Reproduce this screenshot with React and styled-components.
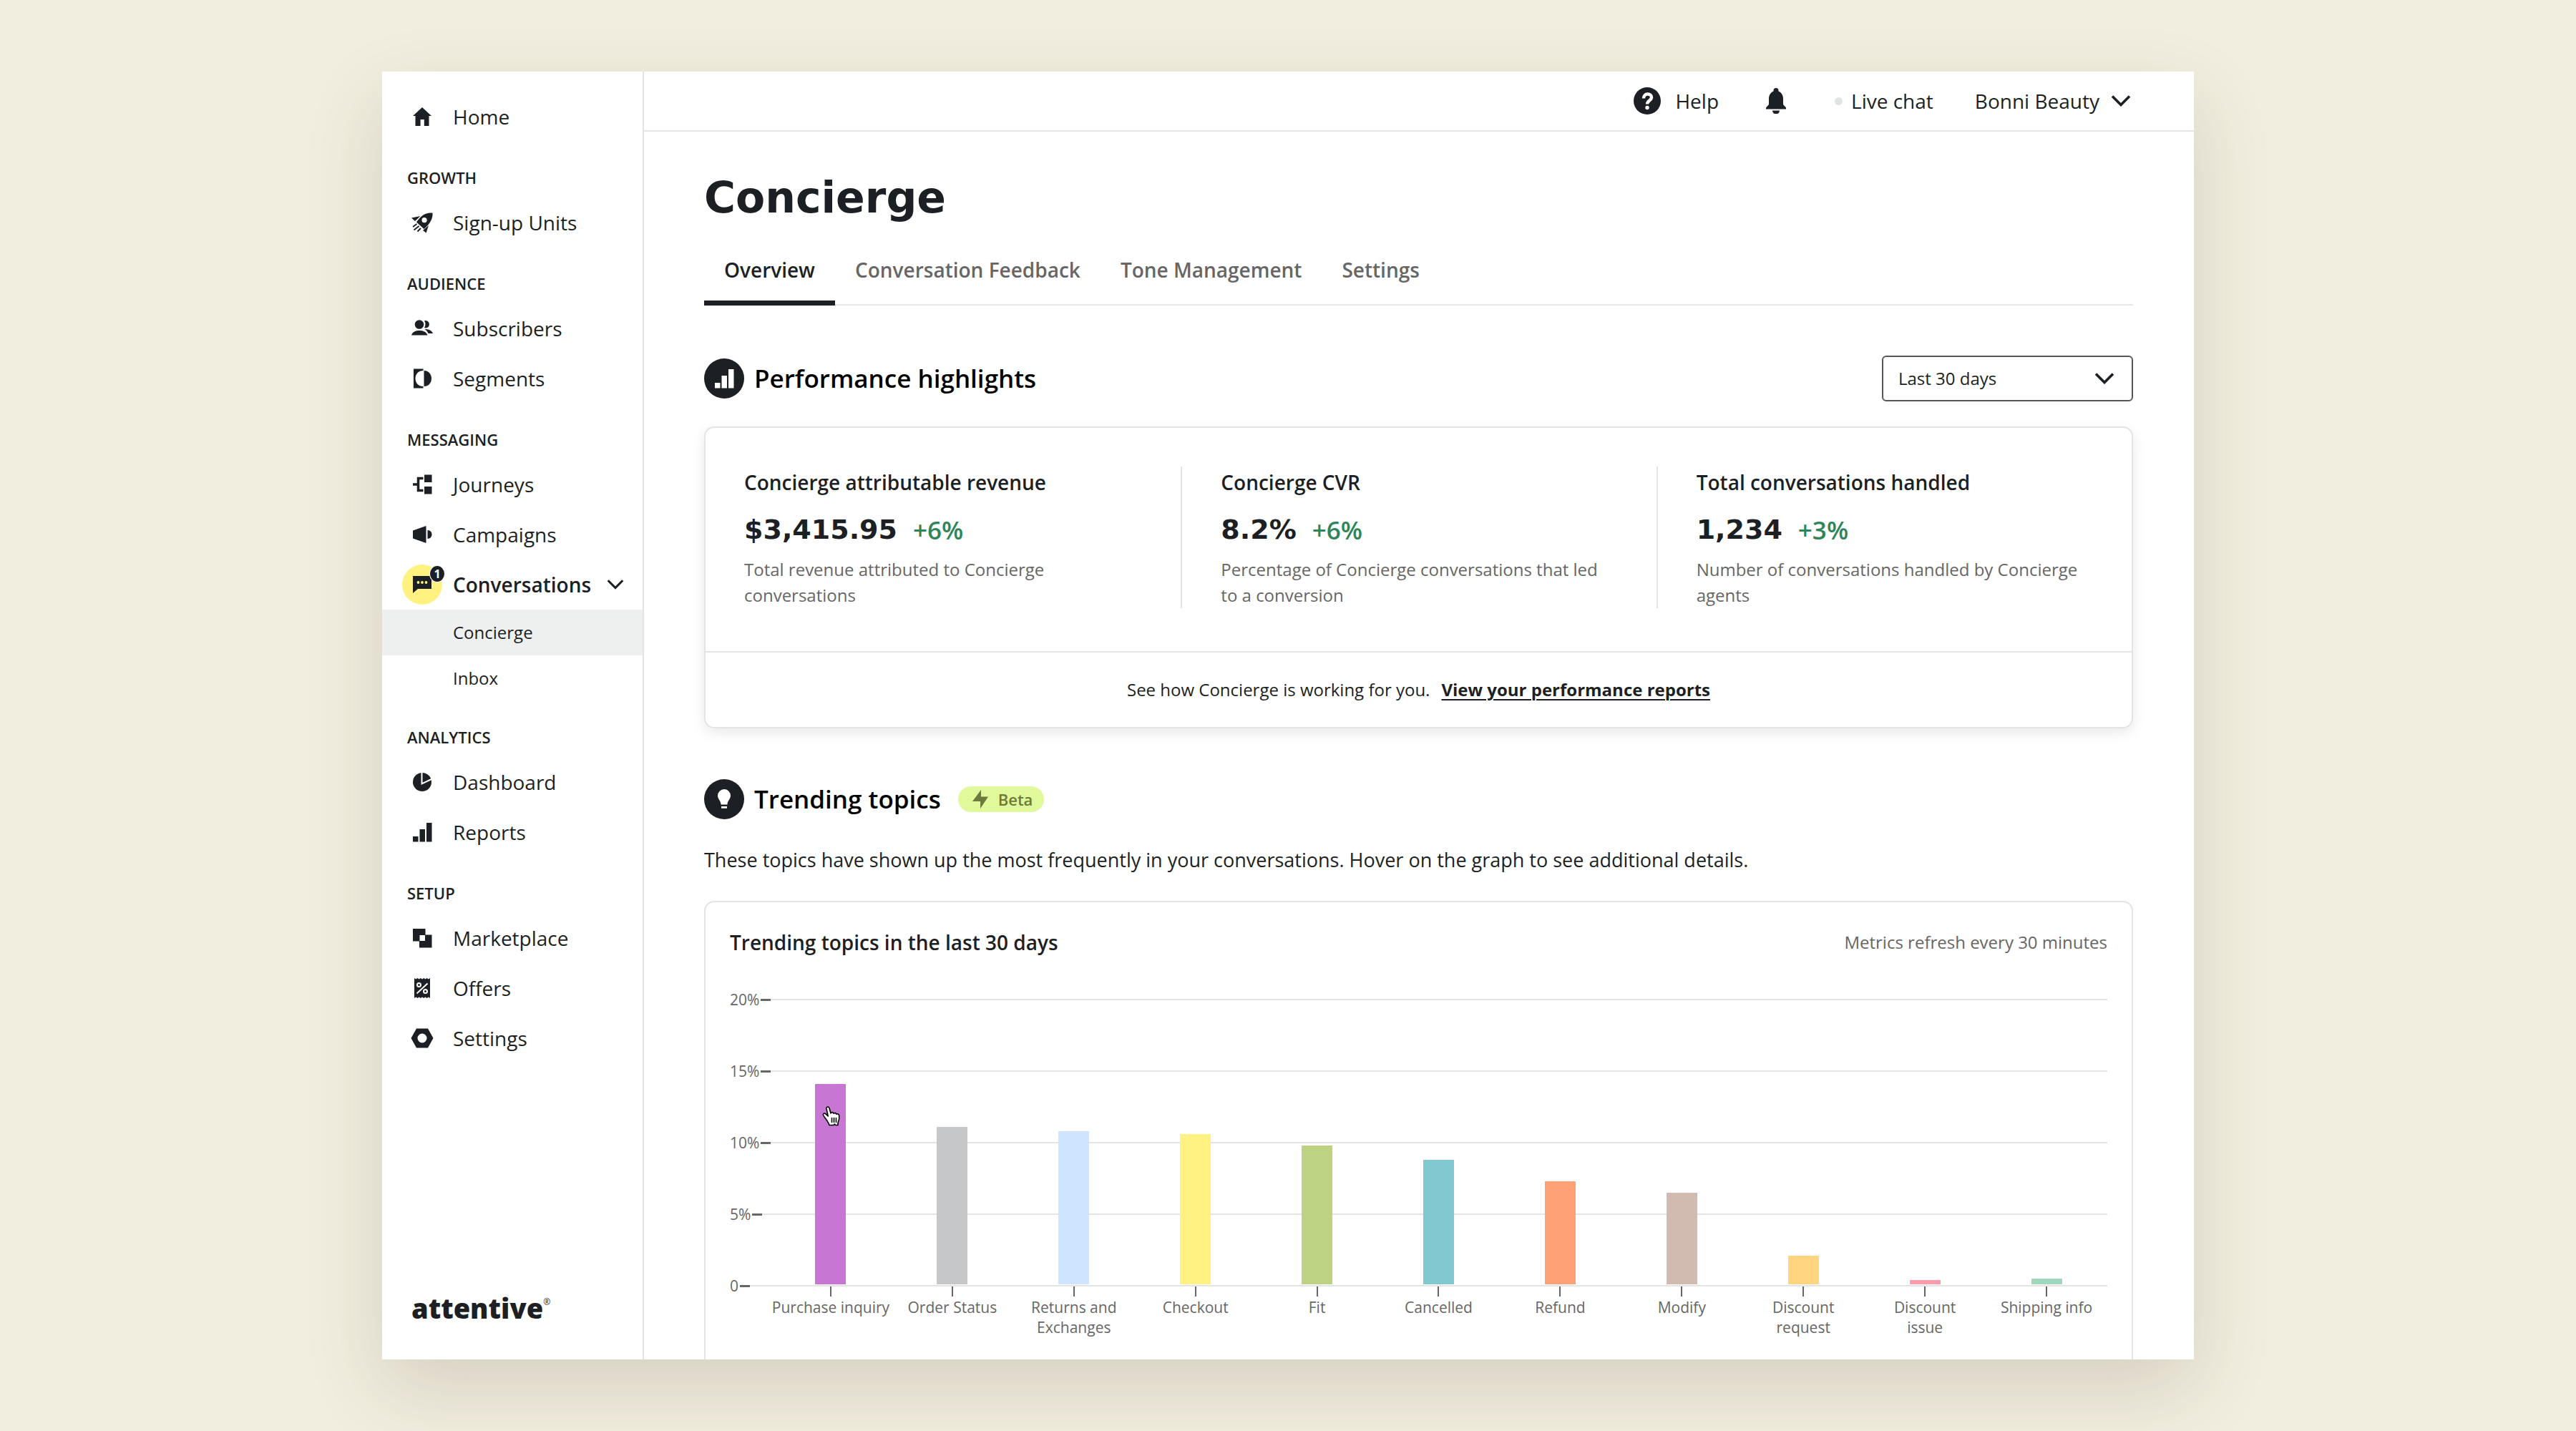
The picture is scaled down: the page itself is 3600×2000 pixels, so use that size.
import React from "react";
import styled, { createGlobalStyle, css } from "styled-components";

const INK = "#1c1f23";
const MUTED = "#666666";
const LINE = "#e4e4e4";
const BODY = `"Open Sans", "Noto Sans", sans-serif`;
const WIDE = `"DejaVu Sans", "Open Sans", sans-serif`;

const GlobalStyle = createGlobalStyle`
  *, *::before, *::after { box-sizing: border-box; }
  body { margin: 0; background: #f2eedf; color: ${INK}; font-family: ${BODY}; font-size: 28px; }
  h1, h2, h3, p, ul, dl, dd, figure { margin: 0; padding: 0; }
  ul { list-style: none; }
  a { color: inherit; text-decoration: none; }
  button, select { font: inherit; color: inherit; background: none; border: 0; padding: 0; cursor: pointer; }
  svg { display: block; flex: none; }
`;

const Stage = styled.div`
  min-height: 100vh;
  padding: 100px 534px;
  display: flex;
`;

const Window = styled.div`
  flex: 1;
  min-width: 0;
  display: flex;
  height: calc(100vh - 200px);
  overflow: hidden;
  background: #fff;
  box-shadow: 0 40px 100px rgba(60, 50, 30, 0.16);
`;

/* ---------- sidebar ---------- */

const Sidebar = styled.nav`
  width: 366px;
  flex: none;
  display: flex;
  flex-direction: column;
  justify-content: space-between;
  padding: 28px 0 52px;
  border-right: 2px solid ${LINE};
`;

const SectionLabel = styled.h3`
  padding: 34px 0 12px 35px;
  font-size: 22px;
  line-height: 32px;
  font-weight: 600;
`;

const NavLink = styled.a`
  display: flex;
  align-items: center;
  gap: 22px;
  height: 70px;
  padding: 0 28px 0 35px;
  line-height: 38px;
  font-weight: ${(p) => (p.$active ? 600 : 400)};
  > svg:last-child { margin-left: auto; }
`;

const NavIcon = styled.span`
  position: relative;
  width: 42px;
  height: 42px;
  flex: none;
  display: grid;
  place-items: center;
`;

const Halo = styled.span`
  width: 56px;
  height: 56px;
  margin: -7px;
  border-radius: 50%;
  background: #fff280;
  display: grid;
  place-items: center;
`;

const Count = styled.span`
  position: absolute;
  top: -6px;
  right: -11px;
  width: 22px;
  height: 24px;
  border-radius: 50%;
  border: 1px solid #fff;
  background: ${INK};
  color: #fff;
  font-size: 16px;
  line-height: 22px;
  font-weight: 700;
  text-align: center;
`;

const SubLink = styled.a`
  display: block;
  padding-left: 99px;
  font-size: 24px;
  line-height: 64px;
  background: ${(p) => (p.$active ? "#eef0f0" : "transparent")};
`;

const Logo = styled.a`
  display: flex;
  align-items: flex-start;
  padding-left: 41px;
  font-size: 38px;
  line-height: 40px;
  font-weight: 800;
  sup { font-size: 12px; line-height: 24px; font-weight: 400; vertical-align: top; }
`;

/* ---------- header ---------- */

const Main = styled.div`
  flex: 1;
  min-width: 0;
  display: flex;
  flex-direction: column;
`;

const Header = styled.header`
  display: flex;
  flex: none;
  justify-content: flex-end;
  align-items: center;
  height: 84px;
  padding-right: 88px;
  border-bottom: 2px solid ${LINE};
`;

const HeaderButton = styled.button`
  display: flex;
  align-items: center;
  gap: ${(p) => p.$gap || 20}px;
  margin-left: ${(p) => p.$space || 0}px;
  line-height: 38px;
`;

const Dot = styled.span`
  width: 11px;
  height: 11px;
  border-radius: 50%;
  background: #e2e4e4;
`;

/* ---------- content ---------- */

const Content = styled.main`
  flex: 1;
  min-height: 0;
  padding: 56px 85px 0 84px;
`;

const Title = styled.h1`
  font-family: ${WIDE};
  font-size: 60px;
  line-height: 72px;
  font-weight: 700;
`;

const Tabs = styled.div`
  display: flex;
  margin-top: 16px;
  border-bottom: 2px solid #e9e9e9;
`;

const Tab = styled.button`
  height: 99px;
  margin-bottom: -2px;
  padding: 0 28px 2px;
  font-weight: 600;
  color: ${(p) => (p.$active ? INK : MUTED)};
  box-shadow: ${(p) => (p.$active ? `inset 0 -7px 0 ${INK}` : "none")};
`;

const SectionHead = styled.div`
  display: flex;
  align-items: center;
  height: 64px;
  margin-top: ${(p) => p.$space}px;
`;

const Disc = styled.span`
  width: 56px;
  height: 56px;
  border-radius: 50%;
  background: ${INK};
  color: #fff;
  display: grid;
  place-items: center;
`;

const SectionTitle = styled.h2`
  margin-left: 14px;
  font-size: 35px;
  line-height: 48px;
  font-weight: 600;
  color: #000;
`;

const SelectBox = styled.label`
  position: relative;
  width: 351px;
  margin-left: auto;
  select {
    appearance: none;
    display: block;
    width: 100%;
    height: 64px;
    padding: 0 72px 2px 21px;
    border: 2px solid #54575a;
    border-radius: 6px;
    font-size: 24px;
  }
  svg { position: absolute; right: 26px; top: 24px; pointer-events: none; }
`;

const Card = styled.section`
  margin-top: ${(p) => p.$space}px;
  border: 2px solid ${LINE};
  border-radius: 14px;
  ${(p) => p.$raised && css`box-shadow: 0 6px 18px rgba(0, 0, 0, 0.09);`}
`;

const Stats = styled.div`
  display: grid;
  grid-template-columns: repeat(3, 1fr);
  padding: 54px 0 60px;
`;

const Stat = styled.article`
  padding: 0 54px;
  & + & { border-left: 2px solid ${LINE}; }
  h3 { font-size: 28px; line-height: 44px; font-weight: 600; }
  p { font-size: 24px; line-height: 36px; color: ${MUTED}; }
`;

const Figure = styled.div`
  display: flex;
  align-items: center;
  gap: 22px;
  margin: 22px 0 16px;
  height: 44px;
  strong { font-family: ${WIDE}; font-size: 38px; font-weight: 700; }
  span { font-size: 35px; font-weight: 600; color: #2f855a; }
`;

const CardFoot = styled.div`
  display: flex;
  justify-content: center;
  gap: 16px;
  border-top: 2px solid ${LINE};
  font-size: 24px;
  line-height: 104px;
  a { font-weight: 700; text-decoration: underline; text-decoration-thickness: 2px; text-underline-offset: 4px; }
`;

const Badge = styled.span`
  display: flex;
  align-items: center;
  gap: 14px;
  height: 36px;
  margin-left: 24px;
  padding: 0 16px 0 20px;
  border-radius: 18px;
  background: #e0f99b;
  color: #6c7a3c;
  font-size: 22px;
  font-weight: 600;
`;

const Lead = styled.p`
  margin-top: 33px;
  font-size: 27px;
  line-height: 40px;
`;

const ChartHead = styled.div`
  display: flex;
  justify-content: space-between;
  align-items: center;
  padding: 36px 34px 0;
  line-height: 40px;
  h3 { font-size: 28px; font-weight: 600; }
  p { font-size: 24px; color: ${MUTED}; }
`;

const Chart = styled.figure`
  display: grid;
  padding: 46px 34px 60px;
  > * { grid-area: 1 / 1; }
`;

const Scale = styled.ul`
  display: flex;
  flex-direction: column;
`;

const ScaleRow = styled.li`
  display: flex;
  align-items: center;
  height: 28px;
  margin-bottom: 72px;
  font-size: 21px;
  color: ${MUTED};
  &::after { content: ""; flex: 1; height: 2px; background: ${LINE}; }
`;

const ScaleTick = styled.span`
  width: 14px;
  height: 3px;
  margin-left: 2px;
  background: ${MUTED};
`;

const Bars = styled.ul`
  display: grid;
  grid-template-columns: repeat(11, 1fr);
  margin-left: 56px;
  padding-top: 12px;
`;

const Column = styled.li`
  display: flex;
  flex-direction: column;
  align-items: center;
  font-size: 21px;
  line-height: 28px;
  text-align: center;
  color: ${MUTED};
`;

const Track = styled.div`
  height: 402px;
  display: flex;
  align-items: flex-end;
  border-bottom: 2px solid transparent;
`;

const Bar = styled.div`
  position: relative;
  width: 43px;
  background: ${(p) => p.$color};
  svg { position: absolute; left: 8px; top: 29px; }
`;

const Tick = styled.span`
  width: 2px;
  height: 14px;
  margin: 1px 0;
  background: ${MUTED};
`;

const Label = styled.span`
  width: ${(p) => (p.$wrap ? "130px" : "auto")};
  white-space: ${(p) => (p.$wrap ? "normal" : "nowrap")};
`;

/* ---------- icons ---------- */

const Icon = ({ size = 32, children }) => (
  <svg width={size} height={size} viewBox="0 0 32 32" fill="currentColor" aria-hidden="true">{children}</svg>
);

const icons = {
  home: <Icon><path d="M16 3 29 15h-3.500v14h-6.700v-9h-5.200v9H6.500V15H3z" /></Icon>,
  rocket: (
    <Icon>
      <path fillRule="evenodd" d="M30.500 2.500C31 10 28 17 18.500 25L8 15.500C14 7 20 1.500 30.500 2.500zM19 9a3.600 3.600 0 1 0 .1 7.200A3.600 3.600 0 0 0 19 9z" />
      <path d="M1 9.500 13.500 7 6 14zM25 20l-3.500 10.500L17 27z" />
      <path d="M8.500 18 3 22M11.500 21 4.500 26.500M14 24l-4.500 4.500" stroke="currentColor" strokeWidth="1.800" fill="none" />
    </Icon>
  ),
  people: (
    <Icon>
      <circle cx="12" cy="10.500" r="6.300" />
      <path d="M1 25.500c1.500-5 6-6.500 11-6.500s10 1.500 11.500 6.500zM19 5.300a5.200 5.200 0 1 1 0 9.800q3-4.800 0-9.800zM19.500 17c6 0 10 2 11.500 6h-6.500c-1-2.500-2.500-4.500-5-6z" />
    </Icon>
  ),
  segments: (
    <Icon>
      <path fillRule="evenodd" d="M4 2.500h13.500V5C11 5 6.500 9.500 6.500 16s4.500 11 11 11v2.500H4z" />
      <path d="M18.500 5C24.500 5 29 9.500 29 16s-4.500 11-10.500 11z" />
    </Icon>
  ),
  journeys: (
    <Icon>
      <path d="M19 2.500h10.500V13H19zM19 19h10.500v10.500H19z" />
      <path d="M17.500 7.500H10.500v17h7M3 16h7" stroke="currentColor" strokeWidth="3.500" fill="none" />
    </Icon>
  ),
  campaigns: <Icon><path d="M3 10.500 21.500 4v24L3 21.500zM23.500 10q6 .5 6 6t-6 6z" /></Icon>,
  chat: (
    <Icon>
      <path d="M3 4h26v18H10l-7 6z" />
      <g fill="#fff280"><circle cx="10.500" cy="13" r="1.900" /><circle cx="16" cy="13" r="1.900" /><circle cx="21.500" cy="13" r="1.900" /></g>
    </Icon>
  ),
  pie: (
    <Icon>
      <circle cx="16" cy="16" r="13" />
      <path d="M15.500 2v16.500L30 11.500" stroke="#fff" strokeWidth="2" fill="none" />
    </Icon>
  ),
  bars: <Icon><path d="M3 22h7.500v7.500H3zM12.500 12H20v17.500h-7.500zM22 3h7.500v26.500H22z" /></Icon>,
  market: <Icon><path fillRule="evenodd" d="M3 3h17.500v8.500h9v18H12v-9H3zM12.500 12v8H20v-8z" /></Icon>,
  offers: (
    <Icon>
      <path d="M5 2l2.200 1.500L9.400 2l2.200 1.500L13.800 2 16 3.500 18.200 2l2.200 1.500L22.600 2l2.200 1.500L27 2v28l-2.200-1.500L22.600 30l-2.200-1.500L18.200 30 16 28.500 13.800 30l-2.200-1.500L9.400 30l-2.200-1.500L5 30z" />
      <g stroke="#fff" strokeWidth="2" fill="none"><path d="M8.500 23.500 23.500 9.500" /><circle cx="11.500" cy="11.500" r="2.500" /><circle cx="20.500" cy="20.500" r="2.500" /></g>
    </Icon>
  ),
  nut: <Icon><path fillRule="evenodd" d="M8 2.500h16L31.500 16 24 29.500H8L.5 16zM16 9.500a6.500 6.500 0 1 0 0 13 6.500 6.500 0 0 0 0-13z" /></Icon>,
};

const Chevron = ({ width = 28 }) => (
  <svg width={width} height={width / 28 * 16} viewBox="0 0 28 16" fill="none" stroke="currentColor" strokeWidth="3.600" aria-hidden="true">
    <path d="M2 1.500 14 13.500 26 1.500" />
  </svg>
);

const HelpIcon = () => (
  <svg width="38" height="38" viewBox="0 0 38 38" aria-hidden="true">
    <circle cx="19" cy="19" r="19" fill={INK} />
    <path d="M14 15.500c0-8 11-7.500 11-1.500 0 4.500-6 4.500-6 9.500" stroke="#fff" strokeWidth="4.400" fill="none" />
    <circle cx="19" cy="28.500" r="2.700" fill="#fff" />
  </svg>
);

const BellIcon = () => (
  <svg width="28" height="36" viewBox="0 0 28 36" fill={INK} aria-hidden="true">
    <path d="M14 0a3.500 3.500 0 0 1 3.500 3.500v1C22 6.500 24 10.500 24 15v8l4 4.500v2H0v-2L4 23v-8C4 10.500 6 6.500 10.500 4.500v-1A3.500 3.500 0 0 1 14 0zM9 31.500h10a5 5 0 0 1-10 0z" />
  </svg>
);

const BulbIcon = () => (
  <svg width="20" height="28" viewBox="0 0 20 28" fill="currentColor" aria-hidden="true">
    <path d="M10 0a9 9 0 0 1 9 9c0 5-4.500 7-4.500 12.500h-9C5.500 16 1 14 1 9a9 9 0 0 1 9-9zM6 24h8v2.800H6z" />
  </svg>
);

const BoltIcon = () => (
  <svg width="22" height="26" viewBox="0 0 22 26" fill="currentColor" aria-hidden="true">
    <path d="M12 0v9.500h10L11 26v-10H0z" />
  </svg>
);

const HandCursor = () => (
  <svg width="32" height="32" viewBox="0 0 32 32" fill="#fff" stroke="#000" strokeWidth="1.600" strokeLinejoin="round" strokeLinecap="round" aria-hidden="true">
    <path d="M12 28.500c-.5-2.500-2-4-4-7.500-1.200-2-3.500-4.500-4.500-6.500-.8-1.800 1.500-3.300 3.200-1.800l3.500 3.300L8 5.500C7.500 2.500 11 2 12 4.800l2 7.200c.3-2 3.800-1.800 4.200.3.800-1.300 3.500-.8 3.800 1 1-1.200 3.500-.3 3.700 1.500.3 3 .3 5.500-1.200 9-.6 1.500-.7 3-.5 4.700h-3.500l-1-1.500-1.500 1.500z" />
    <path d="M15.500 18.500v6M18.500 18.500v6M21.500 18.500v6" fill="none" />
  </svg>
);

/* ---------- data ---------- */

const NAV = [
  { items: [["home", "Home"]] },
  { label: "GROWTH", items: [["rocket", "Sign-up Units"]] },
  { label: "AUDIENCE", items: [["people", "Subscribers"], ["segments", "Segments"]] },
  { label: "MESSAGING", items: [["journeys", "Journeys"], ["campaigns", "Campaigns"], ["chat", "Conversations", ["Concierge", "Inbox"]]] },
  { label: "ANALYTICS", items: [["pie", "Dashboard"], ["bars", "Reports"]] },
  { label: "SETUP", items: [["market", "Marketplace"], ["offers", "Offers"], ["nut", "Settings"]] },
];

const STATS = [
  ["Concierge attributable revenue", "$3,415.95", "+6%", "Total revenue attributed to Concierge conversations"],
  ["Concierge CVR", "8.2%", "+6%", "Percentage of Concierge conversations that led to a conversion"],
  ["Total conversations handled", "1,234", "+3%", "Number of conversations handled by Concierge agents"],
];

const TOPICS = [
  ["Purchase inquiry", 14, "#c876d3"],
  ["Order Status", 11, "#c6c7c9"],
  ["Returns and Exchanges", 10.7, "#cfe5ff", true],
  ["Checkout", 10.5, "#fff282"],
  ["Fit", 9.7, "#bdd283"],
  ["Cancelled", 8.7, "#82c8d1"],
  ["Refund", 7.2, "#ffa176"],
  ["Modify", 6.4, "#d1bab0"],
  ["Discount request", 2, "#ffd580", true],
  ["Discount issue", 0.3, "#ff9cab", true],
  ["Shipping info", 0.4, "#a0d8bd"],
];

const PX_PER_POINT = 20;

export default function App() {
  return (
    <>
      <GlobalStyle />
      <Stage>
        <Window>
          <Sidebar>
            <div>
              {NAV.map((group, i) => (
                <div key={i}>
                  {group.label && <SectionLabel>{group.label}</SectionLabel>}
                  <ul>
                    {group.items.map(([icon, name, children]) => (
                      <li key={name}>
                        <NavLink href="#" $active={!!children}>
                          <NavIcon>
                            {children ? <Halo>{icons[icon]}</Halo> : icons[icon]}
                            {children && <Count>1</Count>}
                          </NavIcon>
                          {name}
                          {children && <Chevron width={24} />}
                        </NavLink>
                        {children && children.map((c, n) => (
                          <SubLink key={c} href="#" $active={n === 0}>{c}</SubLink>
                        ))}
                      </li>
                    ))}
                  </ul>
                </div>
              ))}
            </div>
            <Logo href="#">attentive<sup>®</sup></Logo>
          </Sidebar>

          <Main>
            <Header>
              <HeaderButton><HelpIcon />Help</HeaderButton>
              <HeaderButton $space={66} aria-label="Notifications"><BellIcon /></HeaderButton>
              <HeaderButton $space={68} $gap={12}><Dot />Live chat</HeaderButton>
              <HeaderButton $space={58} $gap={16}>Bonni Beauty<Chevron /></HeaderButton>
            </Header>

            <Content>
              <Title>Concierge</Title>
              <Tabs role="tablist">
                {["Overview", "Conversation Feedback", "Tone Management", "Settings"].map((t, i) => (
                  <Tab key={t} role="tab" aria-selected={i === 0} $active={i === 0}>{t}</Tab>
                ))}
              </Tabs>

              <SectionHead $space={70}>
                <Disc>{icons.bars}</Disc>
                <SectionTitle>Performance highlights</SectionTitle>
                <SelectBox>
                  <select aria-label="Date range" defaultValue="30">
                    <option value="30">Last 30 days</option>
                  </select>
                  <Chevron />
                </SelectBox>
              </SectionHead>

              <Card $space={35} $raised>
                <Stats>
                  {STATS.map(([name, value, delta, text]) => (
                    <Stat key={name}>
                      <h3>{name}</h3>
                      <Figure><strong>{value}</strong><span>{delta}</span></Figure>
                      <p>{text}</p>
                    </Stat>
                  ))}
                </Stats>
                <CardFoot>
                  <span>See how Concierge is working for you.</span>
                  <a href="#">View your performance reports</a>
                </CardFoot>
              </Card>

              <SectionHead $space={67}>
                <Disc><BulbIcon /></Disc>
                <SectionTitle>Trending topics</SectionTitle>
                <Badge><BoltIcon />Beta</Badge>
              </SectionHead>
              <Lead>These topics have shown up the most frequently in your conversations. Hover on the graph to see additional details.</Lead>

              <Card $space={37}>
                <ChartHead>
                  <h3>Trending topics in the last 30 days</h3>
                  <p>Metrics refresh every 30 minutes</p>
                </ChartHead>
                <Chart>
                  <Scale>
                    {["20%", "15%", "10%", "5%", "0"].map((s) => (
                      <ScaleRow key={s}>{s}<ScaleTick /></ScaleRow>
                    ))}
                  </Scale>
                  <Bars>
                    {TOPICS.map(([name, value, color, wrap], i) => (
                      <Column key={name}>
                        <Track>
                          <Bar $color={color} style={{ height: value * PX_PER_POINT }}>
                            {i === 0 && <HandCursor />}
                          </Bar>
                        </Track>
                        <Tick />
                        <Label $wrap={wrap}>{name}</Label>
                      </Column>
                    ))}
                  </Bars>
                </Chart>
              </Card>
            </Content>
          </Main>
        </Window>
      </Stage>
    </>
  );
}
